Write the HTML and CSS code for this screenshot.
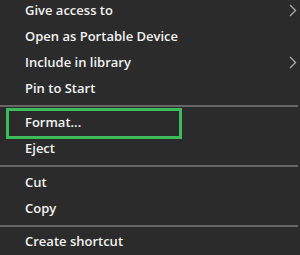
FILE: index.html
```html
<!DOCTYPE html>
<html>
<head>
<meta charset="utf-8">
<link rel="stylesheet" href="styles.css">
</head>
<body>
<div class="menu">
  <div class="item">Give access to<svg class="chev" viewBox="0 0 8 13" width="8" height="13"><path d="M1 1 L6.5 6.5 L1 12" fill="none" stroke="#a8a8a8" stroke-width="1.4"/></svg></div>
  <div class="item">Open as Portable Device</div>
  <div class="item">Include in library<svg class="chev" viewBox="0 0 8 13" width="8" height="13"><path d="M1 1 L6.5 6.5 L1 12" fill="none" stroke="#a8a8a8" stroke-width="1.4"/></svg></div>
  <div class="item">Pin to Start</div>
  <div class="sep"></div>
  <div class="item highlighted">Format...</div>
  <div class="item">Eject</div>
  <div class="sep"></div>
  <div class="item">Cut</div>
  <div class="item">Copy</div>
  <div class="sep sep-tight"></div>
  <div class="item">Create shortcut</div>
</div>
</body>
</html>
```
FILE: styles.css
```css
html, body {
  margin: 0;
  padding: 0;
  background: #2b2b2b;
  width: 300px;
  height: 255px;
  overflow: hidden;
}
.menu {
  display: flex;
  flex-direction: column;
  margin-top: -3px;
  font-family: "Open Sans", "Noto Sans", sans-serif;
  font-weight: 600;
  font-size: 13px;
  color: #f2f2f2;
}
.item {
  position: relative;
  height: 26px;
  line-height: 26px;
  padding-left: 25px;
  display: flex;
  align-items: center;
  white-space: nowrap;
}
.chev {
  position: absolute;
  right: 3px;
  top: 7px;
}
.sep {
  height: 2px;
  background: #666666;
  margin: 4px 2px 2px 0;
}
.sep-tight {
  margin-bottom: 1px;
}
.highlighted::after {
  content: "";
  position: absolute;
  left: 6px;
  width: 170px;
  top: -1px;
  bottom: -4px;
  border: 3px solid #3cba5c;
}
```
